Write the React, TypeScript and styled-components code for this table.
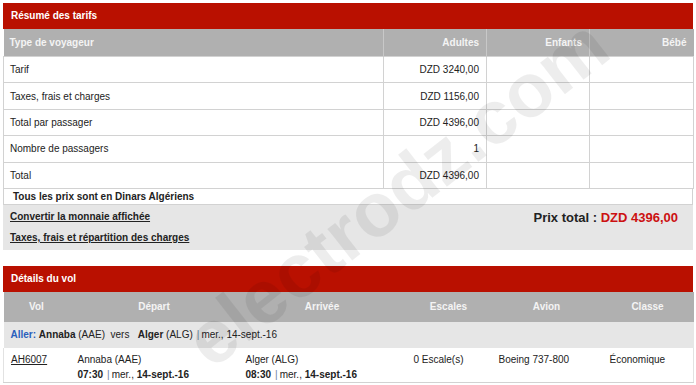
import React from "react";
import styled, {createGlobalStyle} from "styled-components";

const GlobalStyle = createGlobalStyle`
    html, body {
        margin: 0;
        padding: 0;
        background: #ffffff;
        overflow: hidden;
    }
    body {
        font-family: "Liberation Sans", Arial, Helvetica, sans-serif;
        font-size: 10px;
        color: #222222;
    }
`;

const Page = styled.div`
    position: relative;
    width: 690px;
    height: 385px;
    padding: 3px 3px 0 3px;
    overflow: hidden;
`;

const Panel = styled.section`
    display: flex;
    flex-direction: column;
    width: 690px;
    margin-bottom: ${({gap}: {gap?: number}) => gap ? `${gap}px` : "0"};
`;

const PanelTitle = styled.div`
    height: 26px;
    line-height: 26px;
    padding-left: 8px;
    background: #b91000;
    color: #ffffff;
    font-weight: bold;
    font-size: 10px;
`;

const Table = styled.table`
    width: 690px;
    border-collapse: collapse;
    table-layout: fixed;
`;

interface HeadI {
    h?: number,
    align?: string,
    split?: boolean
}

const HeadCell = styled.th`
    height: ${({h}: HeadI) => h || 27}px;
    padding: 0 7px 0 6px;
    background: #b0b0b0;
    color: #f4f4f4;
    font-weight: bold;
    font-size: 10px;
    text-align: ${({align}: HeadI) => align || "left"};
    border-left: ${({split}: HeadI) => split ? "1px solid #c8c8c8" : "none"};
    &:first-child {
        border-left: none;
    }
`;

const Cell = styled.td`
    height: 25.4px;
    padding: 0 7px 0 6px;
    border: 1px solid #d2d2d2;
    font-size: 10px;
    text-align: ${({align}: {align?: string}) => align || "left"};
    background: #ffffff;
`;

const Note = styled.div`
    height: 15px;
    line-height: 15px;
    padding-left: 9px;
    border: 1px solid #d2d2d2;
    border-top: none;
    font-weight: bold;
    font-size: 10px;
`;

const Footer = styled.div`
    display: flex;
    justify-content: space-between;
    align-items: flex-start;
    height: 45px;
    padding: 5px 15px 0 7px;
    box-sizing: border-box;
    background: #e6e6e6;
`;

const Links = styled.div`
    display: flex;
    flex-direction: column;
    gap: 8px;
`;

const Link = styled.a`
    color: #222222;
    font-weight: bold;
    font-size: 10px;
    line-height: 13px;
    text-decoration: underline;
`;

const TotalPrice = styled.div`
    font-weight: bold;
    font-size: 13px;
    line-height: 14px;
    padding-top: 1px;
`;

const Amount = styled.span`
    color: #cc1111;
`;

const FlightCell = styled.td`
    padding: 4px 7px 0 7px;
    vertical-align: top;
    font-size: 10px;
    line-height: 15px;
    height: 30px;
    border-bottom: 1px solid #d2d2d2;
    &:first-child {
        border-left: 1px solid #e2e2e2;
    }
    &:last-child {
        border-right: 1px solid #e2e2e2;
    }
`;

const RouteRow = styled.td`
    height: 26px;
    padding: 0 7px;
    background: #e6e6e6;
    font-size: 10px;
`;

const Blue = styled.b`
    color: #2a5fbc;
`;

const Pipe = styled.span`
    color: #6a7fa0;
    margin: 0 2px 0 4px;
`;

const FlightLink = styled.a`
    color: #222222;
    text-decoration: underline;
`;

// filigrane posé en travers de la page
const Watermark = styled.div`
    position: absolute;
    left: 172px;
    top: 320px;
    transform-origin: 0 0;
    transform: rotate(-38deg);
    font-family: "Liberation Sans", Arial, sans-serif;
    font-weight: bold;
    font-size: 76px;
    line-height: 1;
    white-space: nowrap;
    color: rgba(0, 0, 0, 0.07);
    pointer-events: none;
`;

interface FareRowI {
    label: string,
    adults: string
}

const fares: FareRowI[] = [
    {label: "Tarif", adults: "DZD 3240,00"},
    {label: "Taxes, frais et charges", adults: "DZD 1156,00"},
    {label: "Total par passager", adults: "DZD 4396,00"},
    {label: "Nombre de passagers", adults: "1"},
    {label: "Total", adults: "DZD 4396,00"},
];

const flightCols = [
    {title: "Vol", width: 67},
    {title: "Départ", width: 168},
    {title: "Arrivée", width: 168},
    {title: "Escales", width: 85},
    {title: "Avion", width: 111},
    {title: "Classe", width: 91},
];

function FareSummary() {
    return <Panel gap={16}>
        <PanelTitle>Résumé des tarifs</PanelTitle>
        <Table>
            <colgroup>
                <col style={{width: 380}} />
                <col style={{width: 103}} />
                <col style={{width: 103}} />
                <col style={{width: 104}} />
            </colgroup>
            <thead>
                <tr>
                    <HeadCell>Type de voyageur</HeadCell>
                    <HeadCell split align="right">Adultes</HeadCell>
                    <HeadCell split align="right">Enfants</HeadCell>
                    <HeadCell split align="right">Bébé</HeadCell>
                </tr>
            </thead>
            <tbody>
                {fares.map(f => <tr key={f.label}>
                    <Cell>{f.label}</Cell>
                    <Cell align="right">{f.adults}</Cell>
                    <Cell />
                    <Cell />
                </tr>)}
            </tbody>
        </Table>
        <Note>Tous les prix sont en Dinars Algériens</Note>
        <Footer>
            <Links>
                <Link>Convertir la monnaie affichée</Link>
                <Link>Taxes, frais et répartition des charges</Link>
            </Links>
            <TotalPrice>Prix total : <Amount>DZD 4396,00</Amount></TotalPrice>
        </Footer>
    </Panel>
}

function FlightDetails() {
    return <Panel>
        <PanelTitle>Détails du vol</PanelTitle>
        <Table>
            <colgroup>
                {flightCols.map(c => <col key={c.title} style={{width: c.width}} />)}
            </colgroup>
            <thead>
                <tr>
                    {flightCols.map(c => <HeadCell key={c.title} h={30} align="center">{c.title}</HeadCell>)}
                </tr>
            </thead>
            <tbody>
                <tr>
                    <RouteRow colSpan={6}>
                        <Blue>Aller:</Blue> <b>Annaba</b> (AAE)&nbsp; vers &nbsp; <b>Alger</b> (ALG)
                        <Pipe>|</Pipe>mer., 14-sept.-16
                    </RouteRow>
                </tr>
                <tr>
                    <FlightCell><FlightLink>AH6007</FlightLink></FlightCell>
                    <FlightCell>
                        Annaba (AAE)<br />
                        <b>07:30</b><Pipe>|</Pipe>mer., <b>14-sept.-16</b>
                    </FlightCell>
                    <FlightCell>
                        Alger (ALG)<br />
                        <b>08:30</b><Pipe>|</Pipe>mer., <b>14-sept.-16</b>
                    </FlightCell>
                    <FlightCell>0 Escale(s)</FlightCell>
                    <FlightCell>Boeing 737-800</FlightCell>
                    <FlightCell>Économique</FlightCell>
                </tr>
            </tbody>
        </Table>
    </Panel>
}

export default function App() {
    return <Page>
        <GlobalStyle />
        <FareSummary />
        <FlightDetails />
        <Watermark>electrodz.com</Watermark>
    </Page>
}
